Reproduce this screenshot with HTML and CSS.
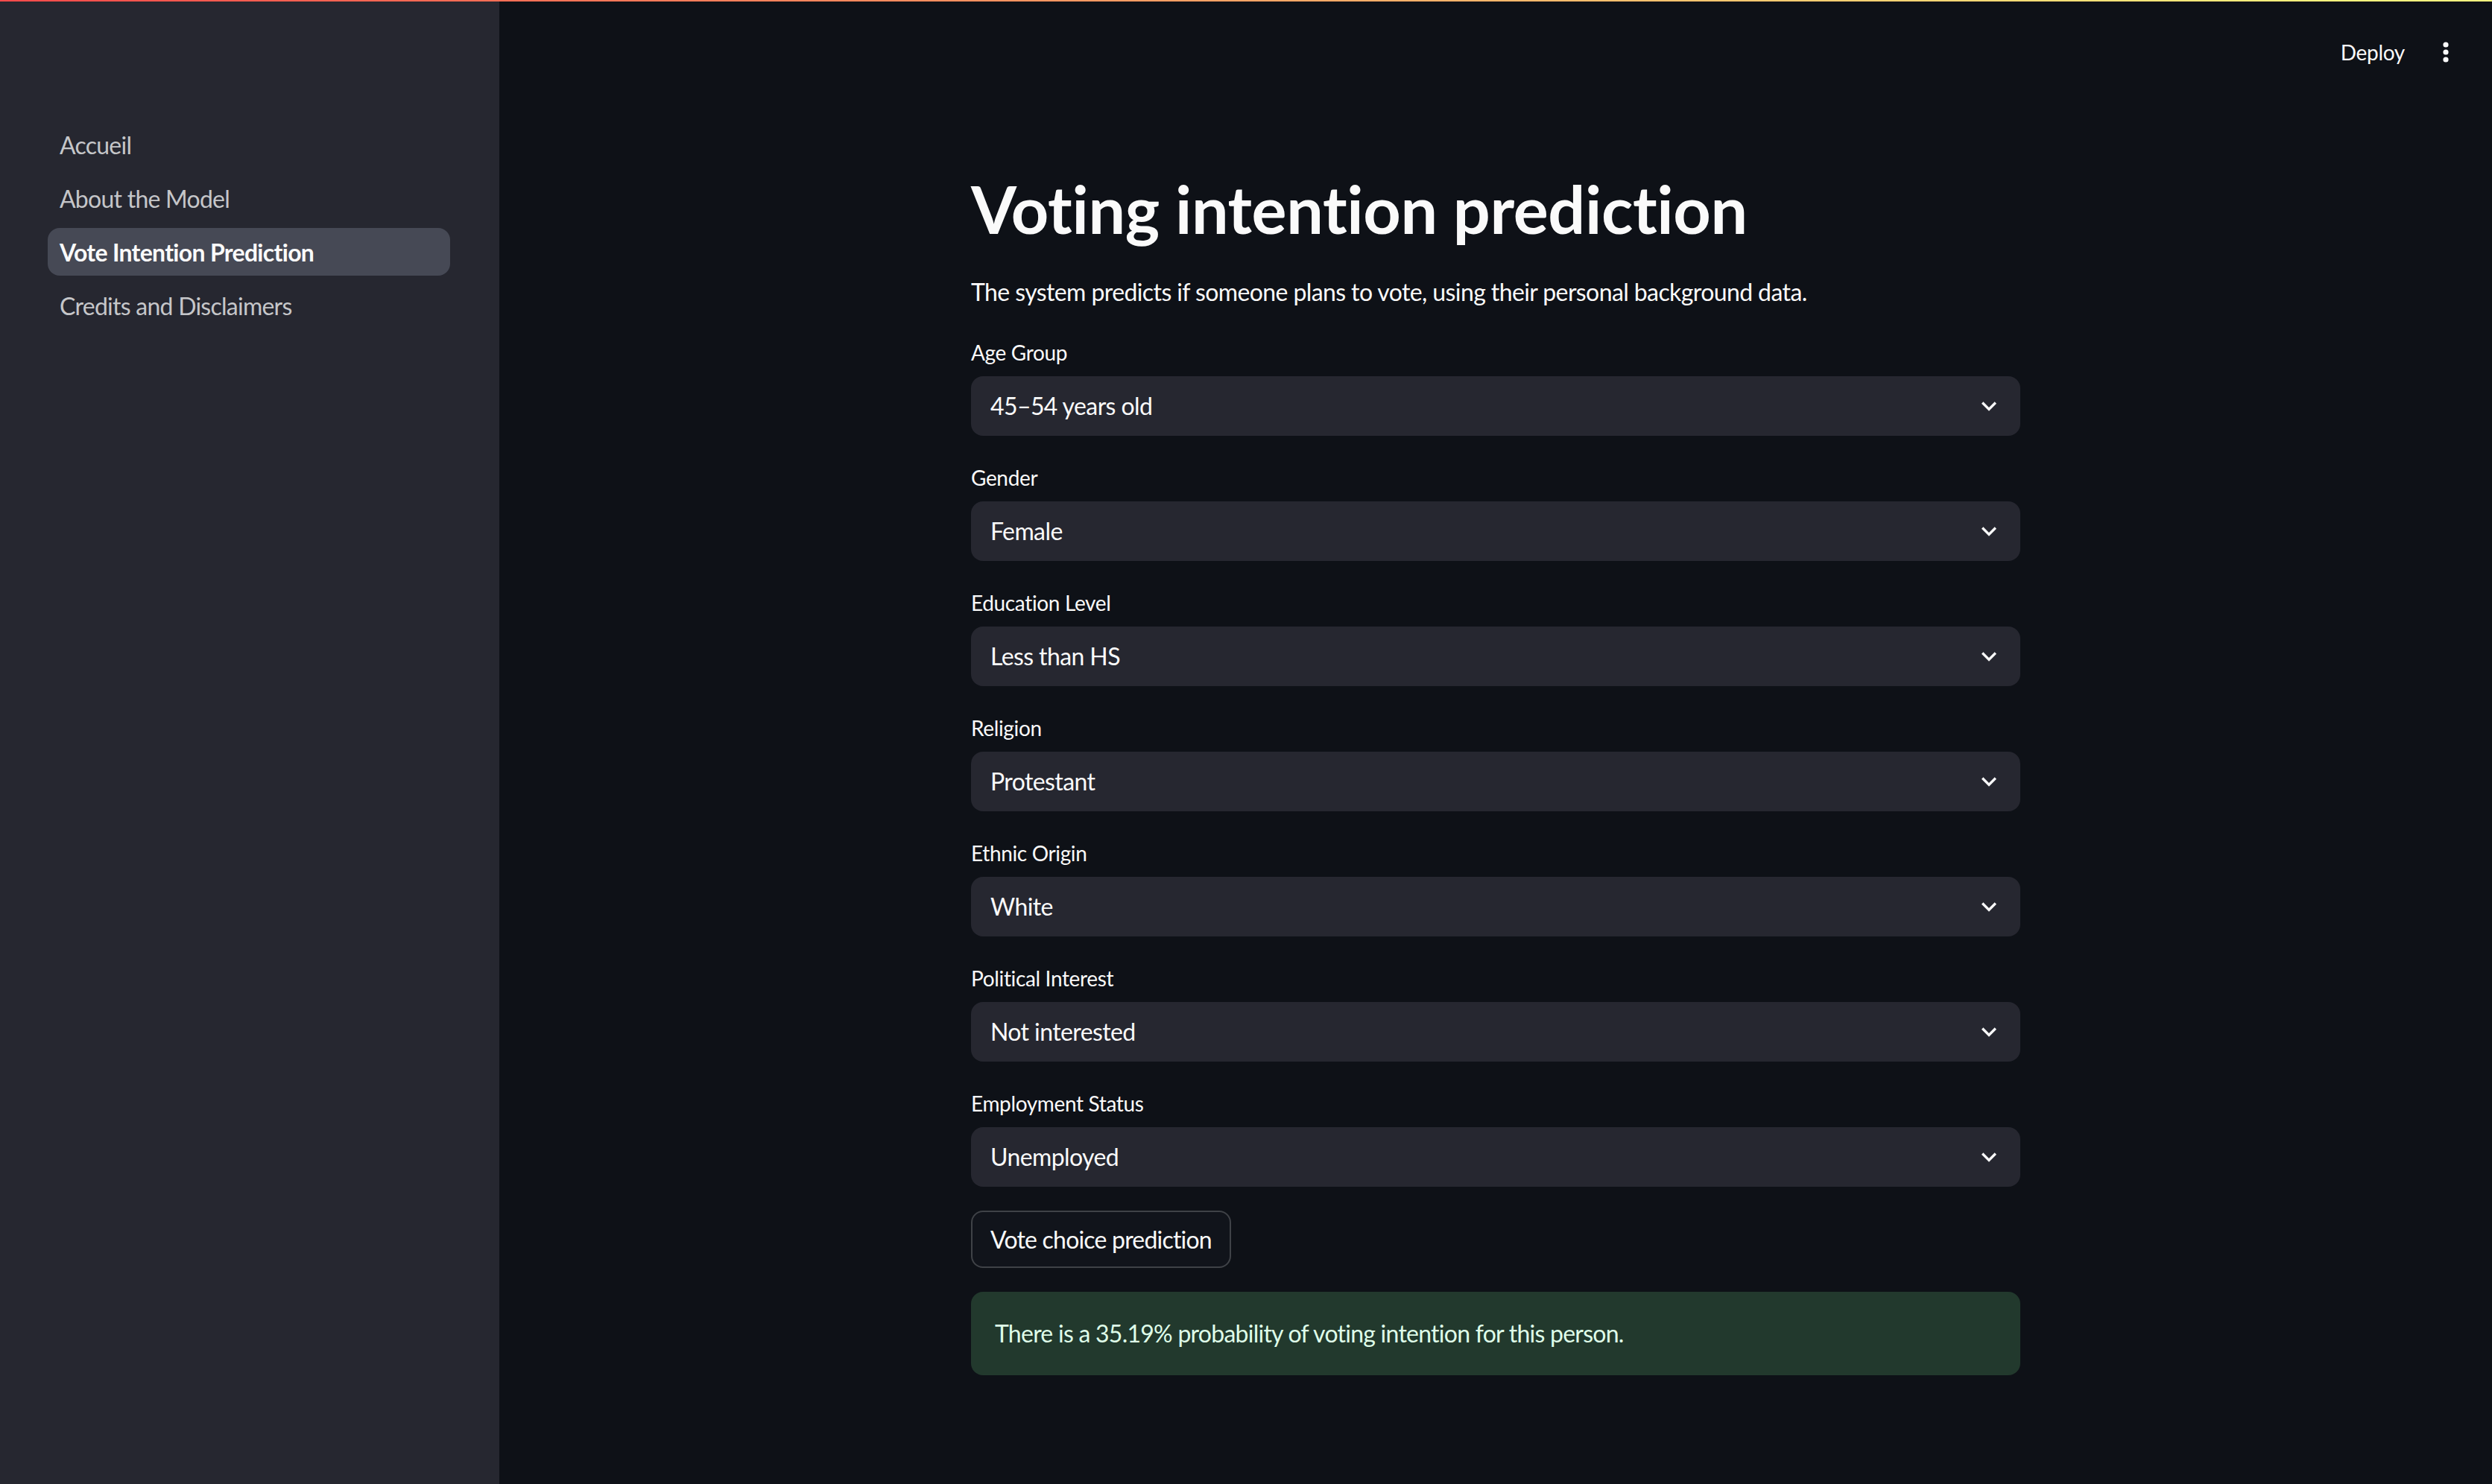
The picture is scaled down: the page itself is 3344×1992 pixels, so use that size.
FILE: index.html
```html
<!DOCTYPE html>
<html lang="en">
<head>
<meta charset="utf-8">
<title>Vote Intention Prediction</title>
<link rel="stylesheet" href="styles.css">
</head>
<body>
<div class="decoration"></div>
<aside class="sidebar">
  <nav class="nav">
    <a class="nav-item">Accueil</a>
    <a class="nav-item">About the Model</a>
    <a class="nav-item active">Vote Intention Prediction</a>
    <a class="nav-item">Credits and Disclaimers</a>
  </nav>
</aside>
<main class="main">
  <header class="header">
    <span class="deploy">Deploy</span>
    <span class="kebab">
      <svg width="40" height="40" viewBox="0 0 40 40"><circle cx="20" cy="10" r="3.6" fill="#fafafa"/><circle cx="20" cy="20" r="3.6" fill="#fafafa"/><circle cx="20" cy="30" r="3.6" fill="#fafafa"/></svg>
    </span>
  </header>
  <section class="content">
    <h1 class="title">Voting intention prediction</h1>
    <p class="intro">The system predicts if someone plans to vote, using their personal background data.</p>

    <div class="field">
      <label class="label">Age Group</label>
      <div class="select"><span>45–54 years old</span><svg class="chev" width="40" height="40" viewBox="0 0 24 24"><path d="M16.59 8.59L12 13.17 7.41 8.59 6 10l6 6 6-6z" fill="#fafafa"/></svg></div>
    </div>
    <div class="field">
      <label class="label">Gender</label>
      <div class="select"><span>Female</span><svg class="chev" width="40" height="40" viewBox="0 0 24 24"><path d="M16.59 8.59L12 13.17 7.41 8.59 6 10l6 6 6-6z" fill="#fafafa"/></svg></div>
    </div>
    <div class="field">
      <label class="label">Education Level</label>
      <div class="select"><span>Less than HS</span><svg class="chev" width="40" height="40" viewBox="0 0 24 24"><path d="M16.59 8.59L12 13.17 7.41 8.59 6 10l6 6 6-6z" fill="#fafafa"/></svg></div>
    </div>
    <div class="field">
      <label class="label">Religion</label>
      <div class="select"><span>Protestant</span><svg class="chev" width="40" height="40" viewBox="0 0 24 24"><path d="M16.59 8.59L12 13.17 7.41 8.59 6 10l6 6 6-6z" fill="#fafafa"/></svg></div>
    </div>
    <div class="field">
      <label class="label">Ethnic Origin</label>
      <div class="select"><span>White</span><svg class="chev" width="40" height="40" viewBox="0 0 24 24"><path d="M16.59 8.59L12 13.17 7.41 8.59 6 10l6 6 6-6z" fill="#fafafa"/></svg></div>
    </div>
    <div class="field">
      <label class="label">Political Interest</label>
      <div class="select"><span>Not interested</span><svg class="chev" width="40" height="40" viewBox="0 0 24 24"><path d="M16.59 8.59L12 13.17 7.41 8.59 6 10l6 6 6-6z" fill="#fafafa"/></svg></div>
    </div>
    <div class="field">
      <label class="label">Employment Status</label>
      <div class="select"><span>Unemployed</span><svg class="chev" width="40" height="40" viewBox="0 0 24 24"><path d="M16.59 8.59L12 13.17 7.41 8.59 6 10l6 6 6-6z" fill="#fafafa"/></svg></div>
    </div>

    <div class="button-row"><button class="btn">Vote choice prediction</button></div>

    <div class="success">There is a 35.19% probability of voting intention for this person.</div>
  </section>
</main>
</body>
</html>
```
FILE: styles.css
```css
* { box-sizing: border-box; }
html, body { margin: 0; padding: 0; }
body {
  background: #0e1117;
  color: #fafafa;
  font-family: Lato, "Liberation Sans", sans-serif;
  letter-spacing: -0.6px;
  display: flex;
  min-height: 100vh;
}
.decoration {
  position: fixed;
  top: 0; left: 0; right: 0;
  height: 2px;
  background: linear-gradient(90deg, #ff4b4b, #fffd80);
  z-index: 10;
}
.sidebar {
  width: 670px;
  flex: none;
  background: #262730;
  min-height: 100vh;
  padding: 162px 66px 0 64px;
}
.nav { display: flex; flex-direction: column; gap: 8px; }
.nav-item {
  height: 64px;
  display: flex;
  align-items: center;
  padding: 0 16px;
  border-radius: 16px;
  font-size: 32px;
  color: #c5c6c9;
  letter-spacing: -0.75px;
}
.nav-item.active {
  background: #464955;
  color: #fafafa;
  font-weight: 700;
  letter-spacing: -0.7px;
}
.main { flex: 1; display: flex; flex-direction: column; }
.header {
  height: 140px;
  display: flex;
  align-items: center;
  justify-content: flex-end;
  padding-right: 42px;
  gap: 35px;
}
.deploy { font-size: 28px; color: #fafafa; letter-spacing: -0.3px; }
.kebab { width: 40px; height: 40px; display: flex; }
.content {
  width: 1408px;
  margin: 0 auto;
  padding-top: 88px;
  display: flex;
  flex-direction: column;
}
.title {
  margin: 0;
  font-size: 88px;
  line-height: 1.2;
  font-weight: 700;
  letter-spacing: -0.35px;
}
.intro {
  margin: 32px 0 32px;
  font-size: 32px;
  line-height: 1.6;
}
.field { display: flex; flex-direction: column; margin-bottom: 32px; }
.label {
  height: 48px;
  margin-bottom: 8px;
  display: flex;
  align-items: center;
  font-size: 28px;
  letter-spacing: -0.35px;
}
.select {
  height: 80px;
  background: #262730;
  border-radius: 16px;
  display: flex;
  align-items: center;
  justify-content: space-between;
  padding: 0 22px 0 26px;
  font-size: 32px;
}
.chev { display: block; }
.button-row { display: flex; margin-bottom: 32px; }
.btn {
  height: 77px;
  padding: 0 24px;
  background: #11141b;
  color: #fafafa;
  border: 2px solid rgba(250, 250, 250, 0.2);
  border-radius: 16px;
  font-family: inherit;
  font-size: 32px;
  letter-spacing: -0.8px;
}
.success {
  background: #22392d;
  color: #dffde9;
  border-radius: 16px;
  padding: 32px;
  font-size: 32px;
  line-height: 48px;
  letter-spacing: -0.75px;
}
```
